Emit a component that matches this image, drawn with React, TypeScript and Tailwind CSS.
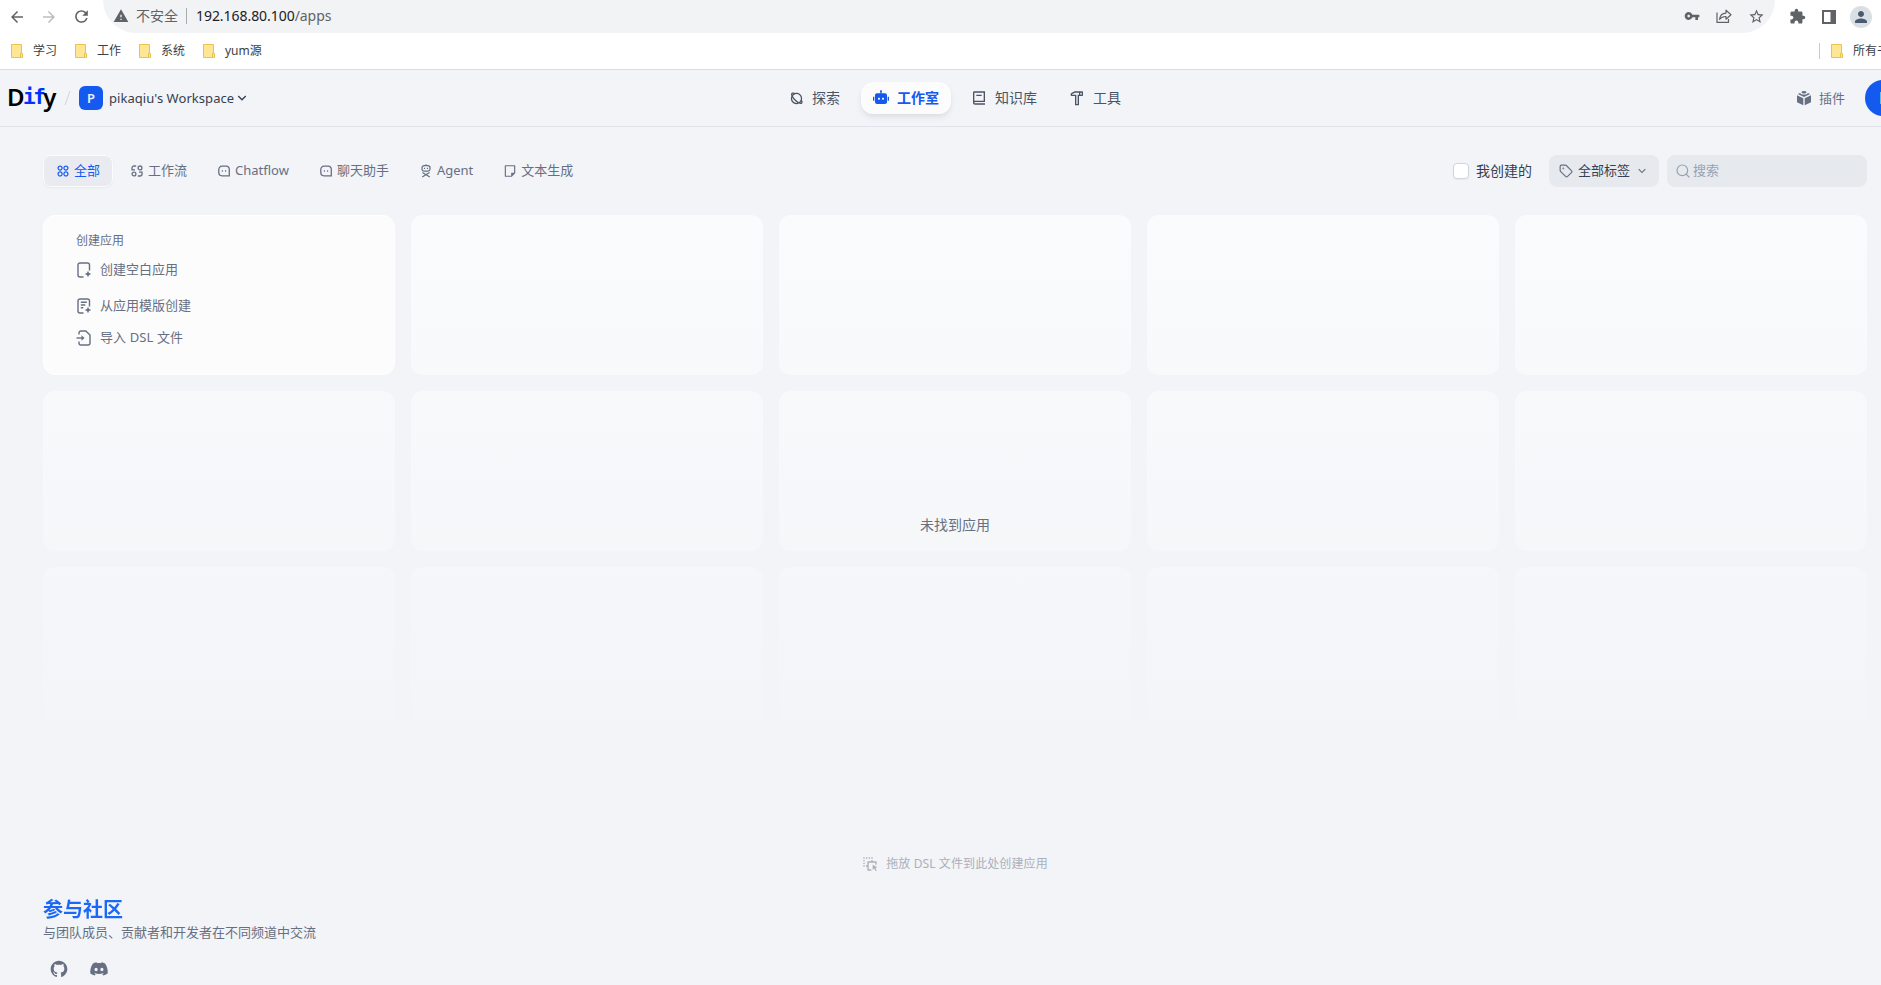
import type { ReactNode } from "react";
import { Search, Tag } from "lucide-react";
import {
  MdArrowBack,
  MdArrowForward,
  MdExtension,
  MdPerson,
  MdRefresh,
  MdStarBorder,
  MdVpnKey,
  MdWarning,
} from "react-icons/md";
import {
  RiApps2Line,
  RiArrowDownSLine,
  RiBook2Line,
  RiDiscordFill,
  RiDragDropLine,
  RiFile4Line,
  RiGithubFill,
  RiHammerLine,
  RiPlanetLine,
  RiRobot2Fill,
} from "react-icons/ri";

function FolderIcon() {
  return (
    <svg width="12" height="14" viewBox="0 0 12 14" className="shrink-0">
      <path d="M.5.5h10v9h1v4H.5z" fill="#ffe694" stroke="#e8c54a" />
      <path d="M9.500 13.500v-4h1" fill="none" stroke="#e8c54a" />
    </svg>
  );
}

function ShareIcon() {
  return (
    <svg width="16" height="16" viewBox="0 0 16 16" fill="none" stroke="#5f6368" strokeWidth="1.2">
      <path d="M1 4.500V14.400h11.500V11" />
      <path d="M3.500 11.300c.5-4 2.800-6 6.500-6.200V2.200l5 4.500-5 4.500V8.500c-3-.1-5 .8-6.500 2.800z" strokeLinejoin="round" />
    </svg>
  );
}

function SidePanelIcon() {
  return (
    <svg width="14" height="14" viewBox="0 0 14 14">
      <path fill="#5f6368" fillRule="evenodd" d="M0 0h14v14H0zM2 2v10h6.500V2z" />
    </svg>
  );
}

function PluginIcon() {
  return (
    <svg width="16" height="16" viewBox="0 0 16 16" fill="#676f83" className="shrink-0">
      <path d="M1 5.300l6.300 3v6.900L1.500 12.500a.8.8 0 0 1-.5-.7z" />
      <path d="M15 5.300l-6.300 3v6.900l5.800-2.700a.8.8 0 0 0 .5-.7z" />
      <path d="M1.800 4.100l2.400-1.200c.3 1 1.800 1.600 3.800 1.600s3.500-.6 3.800-1.600l2.400 1.200L8 7z" />
      <ellipse cx="8" cy="2.200" rx="2.500" ry="1.200" />
    </svg>
  );
}

function WorkflowIcon() {
  return (
    <svg width="14" height="14" viewBox="0 0 14 14" fill="none" stroke="currentColor" strokeWidth="1.300">
      <path d="M6.200 2H4a2 2 0 0 0-2 2v1.800h3" />
      <circle cx="10" cy="3.900" r="1.900" />
      <circle cx="4" cy="10" r="1.900" />
      <path d="M7.800 12H10a2 2 0 0 0 2-2V8.200H9" />
    </svg>
  );
}

function ChatIcon() {
  return (
    <svg width="14" height="14" viewBox="0 0 14 14" fill="none" stroke="currentColor" strokeWidth="1.300">
      <path d="M5 2.200h4.300a3 3 0 0 1 3 3v6.600H5a3.200 3.200 0 0 1-3.200-3.200V5.400A3.200 3.200 0 0 1 5 2.200z" />
      <path d="M5.400 6.300v1.400M8.600 6.300v1.400" strokeWidth="1.100" />
    </svg>
  );
}

function AgentIcon() {
  return (
    <svg width="14" height="14" viewBox="0 0 14 14" fill="none" stroke="currentColor" strokeWidth="1.200">
      <path d="M7 .3v1.300" />
      <rect x="3" y="1.600" width="8" height="5.600" rx="2.200" />
      <path d="M5.500 3.700V5M8.500 3.700V5M3.500 8.500L10.800 13M10.500 8.500L3.200 13" />
    </svg>
  );
}

function NewFileIcon({ lines }: { lines?: boolean }) {
  return (
    <svg width="16" height="16" viewBox="0 0 16 16" fill="none" stroke="currentColor" strokeWidth="1.400">
      <path d="M7.500 15H4a2 2 0 0 1-2-2V3a2 2 0 0 1 2-2h7.500a2 2 0 0 1 2 2v5.500" />
      {lines && <path d="M4.800 4.300h6M4.800 7h4.500M4.800 9.700h2.500" />}
      <path d="M12 9.500v5M9.500 12h5" />
      <path d="M12 10.200l1.800 1.800-1.800 1.800-1.800-1.800z" fill="currentColor" stroke="none" />
    </svg>
  );
}

function ImportFileIcon() {
  return (
    <svg width="16" height="16" viewBox="0 0 16 16" fill="none" stroke="currentColor" strokeWidth="1.400">
      <path d="M3 4.500V3a2 2 0 0 1 2-2h4.800L14 5v8a2 2 0 0 1-2 2H5a2 2 0 0 1-2-2v-1.500" />
      <path d="M.5 8h6" />
      <path d="M5.500 5.300L8.500 8l-3 2.700z" fill="currentColor" stroke="none" />
    </svg>
  );
}

const bookmarks = ["学习", "工作", "系统", "yum源"];

const tabs: { label: string; icon: ReactNode }[] = [
  { label: "全部", icon: <RiApps2Line size={14} /> },
  { label: "工作流", icon: <WorkflowIcon /> },
  { label: "Chatflow", icon: <ChatIcon /> },
  { label: "聊天助手", icon: <ChatIcon /> },
  { label: "Agent", icon: <AgentIcon /> },
  { label: "文本生成", icon: <RiFile4Line size={14} /> },
];

function BrowserBar() {
  return (
    <div className="h-[70px] border-b border-[#dadce0] bg-white text-[#5f6368]">
      <div className="flex h-[33px] items-center">
        <div className="flex w-[103px] shrink-0 items-center gap-3.5 pl-2">
          <MdArrowBack size={18} />
          <MdArrowForward size={18} className="text-[#bcbec1]" />
          <MdRefresh size={19} />
        </div>
        <div className="flex h-full w-[1672px] items-center rounded-b-full rounded-t-2xl bg-[#f1f3f4] pr-2.5 pb-px">
          <MdWarning size={16} className="ml-2.5" />
          <span className="ml-[7px] text-sm">不安全</span>
          <span className="ml-2 mr-[9px] h-4 w-px bg-[#a8abaf]" />
          <span className="text-sm tracking-[-0.05px]">
            <span className="text-[#202124]">192.168.80.100</span>/apps
          </span>
          <div className="ml-auto flex items-center gap-4">
            <MdVpnKey size={16} />
            <ShareIcon />
            <MdStarBorder size={17} />
          </div>
        </div>
        <div className="ml-3.5 flex items-center">
          <MdExtension size={17} />
          <span className="ml-4">
            <SidePanelIcon />
          </span>
          <span className="ml-3.5 flex h-[22px] w-[22px] items-center justify-center rounded-full bg-[#dadfe4] text-[#4b5a73]">
            <MdPerson size={18} />
          </span>
        </div>
      </div>
      <div className="flex h-9 items-center overflow-hidden whitespace-nowrap text-xs text-[#3c4043]">
        {bookmarks.map((name) => (
          <div key={name} className="flex w-16 shrink-0 items-center gap-2.5 pl-[11px]">
            <FolderIcon />
            {name}
          </div>
        ))}
        <div className="ml-auto flex w-[62px] shrink-0 items-center">
          <span className="h-4 w-px shrink-0 bg-[#c8cace]" />
          <span className="ml-[11px] shrink-0">
            <FolderIcon />
          </span>
          <span className="ml-2.5">所有书签</span>
        </div>
      </div>
    </div>
  );
}

function Logo() {
  return (
    <div className="-mt-[3px] flex h-6 w-[47px] items-center text-2xl leading-6 font-semibold text-black">
      <span className="w-4">D</span>
      <span className="w-[21px] font-['DejaVu_Sans_Mono'] text-[21px] tracking-[-2.500px] text-[#0033ff]">if</span>
      <span>y</span>
    </div>
  );
}

function Header() {
  return (
    <header className="flex h-[57px] items-center overflow-hidden border-b border-[#e0e3e9] text-sm text-[#495464]">
      <div className="flex w-[782px] shrink-0 items-center pl-[7px]">
        <Logo />
        <svg width="7" height="16" viewBox="0 0 7 16" className="ml-2.5">
          <path d="M6 1L1 15" stroke="#d0d5dd" />
        </svg>
        <span className="ml-2 flex h-6 w-6 items-center justify-center rounded-md bg-[#155aef] text-[13px] font-semibold text-[#e8effd]">
          P
        </span>
        <span className="ml-1.5 text-[13px] tracking-[0.05px] text-[#354052]">pikaqiu's Workspace</span>
        <RiArrowDownSLine size={16} className="text-[#354052]" />
      </div>
      <nav className="flex items-center">
        <a className="flex w-[79px] items-center gap-2 pl-[7px]">
          <RiPlanetLine size={15} />
          探索
        </a>
        <a className="flex h-8 w-[90px] items-center gap-2 rounded-xl bg-[#fcfcfd] pl-3 font-semibold text-[#155aef] shadow-md shadow-gray-300/60">
          <RiRobot2Fill size={16} />
          工作室
        </a>
        <a className="flex w-[98px] items-center gap-2 pl-5">
          <RiBook2Line size={16} />
          知识库
        </a>
        <a className="flex items-center gap-2 pl-5">
          <RiHammerLine size={16} />
          工具
        </a>
      </nav>
      <div className="ml-auto flex w-[85px] shrink-0 items-center text-[13px] text-[#676f83]">
        <PluginIcon />
        <span className="ml-[7px] w-[46px] shrink-0">插件</span>
        <span className="flex h-9 w-9 shrink-0 items-center justify-start rounded-full bg-[#155aef] pl-3.5 text-base font-medium text-white">
          P
        </span>
      </div>
    </header>
  );
}

function FilterBar() {
  return (
    <div className="flex h-8 items-center justify-between text-[13px] text-[#676f83]">
      <div className="flex items-center gap-1">
        {tabs.map((tab, index) => (
          <div
            key={tab.label}
            className={`flex h-8 items-center gap-1 rounded-lg border px-3 ${
              index === 0
                ? "border-[#fcfcfd] bg-[#e9ebf0] text-[#155aef] shadow-xs"
                : "border-transparent"
            }`}
          >
            {tab.icon}
            {tab.label}
          </div>
        ))}
      </div>
      <div className="flex items-center">
        <span className="h-4 w-4 rounded border border-[#d0d5dd] bg-white shadow-xs" />
        <span className="ml-[7px] text-sm text-[#354052]">我创建的</span>
        <div className="ml-[17px] flex h-8 w-[110px] items-center rounded-lg bg-[#e6e9ee] pl-2.5">
          <Tag size={14} />
          <span className="ml-[5px] text-[#354052]">全部标签</span>
          <RiArrowDownSLine size={14} className="ml-[5px]" />
        </div>
        <div className="ml-2 flex h-8 w-[200px] items-center rounded-lg bg-[#e6e9ee] pl-2 text-[#98a2b2]">
          <Search size={16} strokeWidth={1.8} />
          <span className="ml-0.5">搜索</span>
        </div>
      </div>
    </div>
  );
}

function CreateCard() {
  return (
    <div className="relative z-10 h-40 rounded-xl border border-white bg-[#fcfcfd] pt-4 pl-8 text-[13px] text-[#676f83]">
      <div className="text-xs leading-[18px]">创建应用</div>
      <div className="mt-0.5 flex h-9 items-center gap-2">
        <NewFileIcon />
        创建空白应用
      </div>
      <div className="flex h-9 items-center gap-2">
        <NewFileIcon lines />
        从应用模版创建
      </div>
      <div className="flex h-7 items-center gap-2">
        <ImportFileIcon />
        <span className="tracking-[0.1px]">导入 DSL 文件</span>
      </div>
    </div>
  );
}

export default function App() {
  return (
    <div className="flex h-[985px] w-[1881px] flex-col overflow-hidden bg-[#f2f4f8] font-['Noto_Sans','Noto_Sans_CJK_SC',sans-serif]">
      <BrowserBar />
      <Header />
      <main className="flex flex-1 flex-col pt-7 pr-3.5 pl-[43px]">
        <FilterBar />
        <div className="relative mt-7 h-[624px] shrink-0 overflow-hidden">
          <div className="grid grid-cols-5 gap-4">
            <CreateCard />
            {Array.from({ length: 19 }, (_, i) => (
              <div key={i} className="h-40 rounded-xl bg-[#fafbfc]" />
            ))}
          </div>
          {/* fades the placeholder cards into the page */}
          <div className="absolute inset-0 bg-linear-to-t from-[#f2f4f8] from-10% to-[#f2f4f8]/0" />
          <p className="absolute inset-x-0 top-[299px] text-center text-sm leading-[22px] text-[#676f83]">
            未找到应用
          </p>
        </div>
        <div className="mt-4 flex h-[18px] items-center justify-center gap-2 text-xs text-[#abb0ba]">
          <RiDragDropLine size={16} />
          <span className="tracking-[0.1px]">拖放 DSL 文件到此处创建应用</span>
        </div>
        <footer className="mt-6">
          <h3 className="bg-linear-to-r from-[#1a68f5] to-[#1a7bff] bg-clip-text text-xl leading-[25px] font-semibold text-transparent">
            参与社区
          </h3>
          <p className="text-[13px] leading-5 text-[#676f83]">与团队成员、贡献者和开发者在不同频道中交流</p>
          <div className="mt-[17px] flex gap-5 pl-1.5 text-[#676f83]">
            <RiGithubFill size={20} />
            <RiDiscordFill size={20} />
          </div>
        </footer>
      </main>
    </div>
  );
}
